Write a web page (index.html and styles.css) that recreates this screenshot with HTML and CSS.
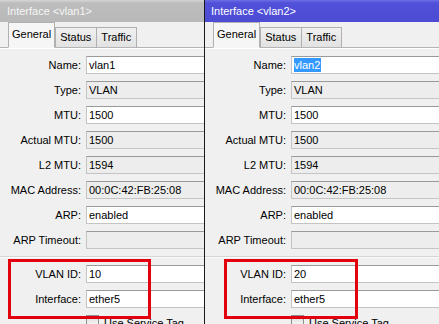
FILE: index.html
```html
<!DOCTYPE html>
<html lang="en">

<head>
    <meta charset="UTF-8">
    <meta name="viewport" content="width=device-width, initial-scale=1.0">
    <title>Interface vlan1 / vlan2</title>
    <link rel="stylesheet" href="styles.css">
</head>

<body>
    <main class="desk">
        <!-- left window: inactive -->
        <section class="window inactive">
            <header class="titlebar">Interface &lt;vlan1&gt;</header>
            <nav class="tabs">
                <span class="tab active">General</span>
                <span class="tab">Status</span>
                <span class="tab">Traffic</span>
            </nav>
            <div class="panel">
                <div class="row"><label>Name:</label><span class="field">vlan1</span></div>
                <div class="row"><label>Type:</label><span class="field ro">VLAN</span></div>
                <div class="row"><label>MTU:</label><span class="field">1500</span></div>
                <div class="row"><label>Actual MTU:</label><span class="field ro">1500</span></div>
                <div class="row"><label>L2 MTU:</label><span class="field ro">1594</span></div>
                <div class="row"><label>MAC Address:</label><span class="field ro">00:0C:42:FB:25:08</span></div>
                <div class="row"><label>ARP:</label><span class="field">enabled</span></div>
                <div class="row"><label>ARP Timeout:</label><span class="field ro"></span></div>
                <hr class="sep">
                <div class="row"><label>VLAN ID:</label><span class="field">10</span></div>
                <div class="row"><label>Interface:</label><span class="field">ether5</span></div>
                <div class="check"><span class="box"></span>Use Service Tag</div>
            </div>
            <div class="mark mark-left"></div>
        </section>

        <!-- right window: active -->
        <section class="window focused">
            <header class="titlebar">Interface &lt;vlan2&gt;</header>
            <nav class="tabs">
                <span class="tab active">General</span>
                <span class="tab">Status</span>
                <span class="tab">Traffic</span>
            </nav>
            <div class="panel">
                <div class="row"><label>Name:</label><span class="field"><span class="sel">vlan2</span></span></div>
                <div class="row"><label>Type:</label><span class="field ro">VLAN</span></div>
                <div class="row"><label>MTU:</label><span class="field">1500</span></div>
                <div class="row"><label>Actual MTU:</label><span class="field ro">1500</span></div>
                <div class="row"><label>L2 MTU:</label><span class="field ro">1594</span></div>
                <div class="row"><label>MAC Address:</label><span class="field ro">00:0C:42:FB:25:08</span></div>
                <div class="row"><label>ARP:</label><span class="field">enabled</span></div>
                <div class="row"><label>ARP Timeout:</label><span class="field ro"></span></div>
                <hr class="sep">
                <div class="row"><label>VLAN ID:</label><span class="field">20</span></div>
                <div class="row"><label>Interface:</label><span class="field">ether5</span></div>
                <div class="check"><span class="box"></span>Use Service Tag</div>
            </div>
            <div class="mark mark-right"></div>
        </section>
    </main>
</body>

</html>
```

FILE: styles.css
```css
html,
body {
    margin: 0;
    padding: 0;
}

body {
    width: 439px;
    height: 324px;
    overflow: hidden;
    background: #f0f0f0;
    font-family: "Liberation Sans", Arial, sans-serif;
    font-size: 11px;
    color: #000;
}

.desk {
    display: flex;
    height: 324px;
}

.window {
    position: relative;
    display: flex;
    flex-direction: column;
    background: #f0f0f0;
    overflow: hidden;
}

.window.inactive {
    width: 204px;
    flex: none;
}

.window.focused {
    flex: 1;
    border-left: 1px solid #1a1a1a;
}

.titlebar {
    height: 22px;
    line-height: 22px;
    padding-left: 7px;
    white-space: nowrap;
    flex: none;
}

.inactive .titlebar {
    background: linear-gradient(#d6d6d6 0, #bdbdbd 3px, #b9b9b9 100%);
    color: #f6f6f6;
}

.focused .titlebar {
    padding-left: 6px;
    background: linear-gradient(#6d6de6 0, #5050d8 3px, #4b4bd4 100%);
    color: #fff;
}

/* tab strip */
.tabs {
    display: flex;
    align-items: flex-end;
    height: 25px;
    padding-left: 8px;
    border-bottom: 1px solid #b4b4b4;
    flex: none;
}

.tab {
    height: 19px;
    line-height: 19px;
    padding: 0 5px 0 4px;
    margin-left: -1px;
    margin-bottom: -1px;
    border: 1px solid #b0b0b0;
    border-bottom-color: #b4b4b4;
    background: linear-gradient(#f0f0f0, #e2e2e2);
    white-space: nowrap;
}

.tab.active {
    height: 24px;
    line-height: 23px;
    padding: 0 3px;
    margin-left: 0;
    margin-right: 1px;
    background: #f6f6f6;
    border-bottom-color: #f6f6f6;
    z-index: 1;
}

.panel {
    padding-top: 7px;
    border-top: 1px solid #fff;
}

.row {
    display: grid;
    grid-template-columns: 81px 1fr;
    column-gap: 5px;
    align-items: center;
    height: 18px;
    margin-bottom: 7px;
}

.row label {
    text-align: right;
    white-space: nowrap;
}

.field {
    display: block;
    box-sizing: border-box;
    height: 18px;
    line-height: 16px;
    margin-right: -6px;
    padding-left: 2px;
    border: 1px solid #c4c4c4;
    border-top-color: #9a9a9a;
    background: #fff;
    white-space: nowrap;
}

.field.ro {
    background: #ededed;
}

.sel {
    display: inline-block;
    background: #3399ff;
    color: #fff;
    line-height: 14px;
    padding-right: 1px;
}

.sep {
    height: 0;
    margin: 2px 0 7px;
    border: 0;
    border-top: 1px solid #d6d6d6;
    border-bottom: 1px solid #fafafa;
}

/* checkbox row, cut by the bottom edge in the shot */
.check {
    display: flex;
    align-items: flex-start;
    margin-top: 2px;
    padding-left: 86px;
    height: 16px;
    line-height: 16px;
    white-space: nowrap;
}

.check .box {
    width: 11px;
    height: 11px;
    margin-top: 0;
    margin-right: 5px;
    border: 1px solid #8e8f8f;
    background: linear-gradient(#dcdcdc, #fbfbfb);
    flex: none;
}

/* red annotation frames drawn over the screenshot */
.mark {
    position: absolute;
    top: 259px;
    height: 54px;
    border: 3px solid #e2000f;
}

.mark-left {
    left: 8px;
    width: 137px;
}

.mark-right {
    left: 19px;
    width: 128px;
}
```
